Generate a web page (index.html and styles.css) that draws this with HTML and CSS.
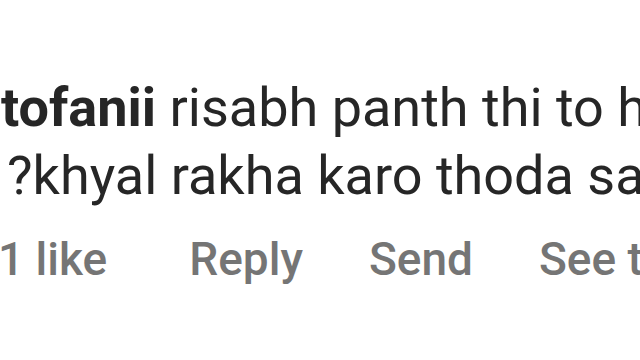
FILE: index.html
```html
<!DOCTYPE html>
<html lang="en">
<head>
    <meta charset="UTF-8">
    <meta name="viewport" content="width=device-width, initial-scale=1.0">
    <title>Comment</title>
    <link rel="stylesheet" href="styles.css">
</head>
<body>
    <div class="comment">
        <div class="comment-text">
            <div class="line first"><span class="username">tofanii</span> risabh panth thi to hota</div>
            <div class="line">?khyal rakha karo thoda sa</div>
        </div>
        <div class="comment-actions">
            <span class="action likes">1 like</span>
            <span class="action">Reply</span>
            <span class="action">Send</span>
            <span class="action">See translation</span>
        </div>
    </div>
</body>
</html>
```

FILE: styles.css
```css
body {
    margin: 0;
    padding: 0;
    background-color: #fff;
    font-family: Roboto, "Noto Sans", sans-serif;
    overflow: hidden;
}

.comment {
    width: 640px;
    height: 360px;
    padding: 74px 0 0 7px;
    box-sizing: border-box;
    overflow: hidden;
}

.comment-text {
    color: #262626;
    font-size: 54px;
    line-height: 68px;
}

.line {
    white-space: nowrap;
}

.line.first {
    margin-left: -6px;
}

.username {
    font-weight: bold;
}

.comment-actions {
    display: flex;
    gap: 66px;
    margin-top: 19px;
    margin-left: -9px;
    color: #757575;
    font-size: 46px;
    font-weight: 500;
    line-height: 60px;
    white-space: nowrap;
}

.likes {
    margin-right: 16px;
}
```
